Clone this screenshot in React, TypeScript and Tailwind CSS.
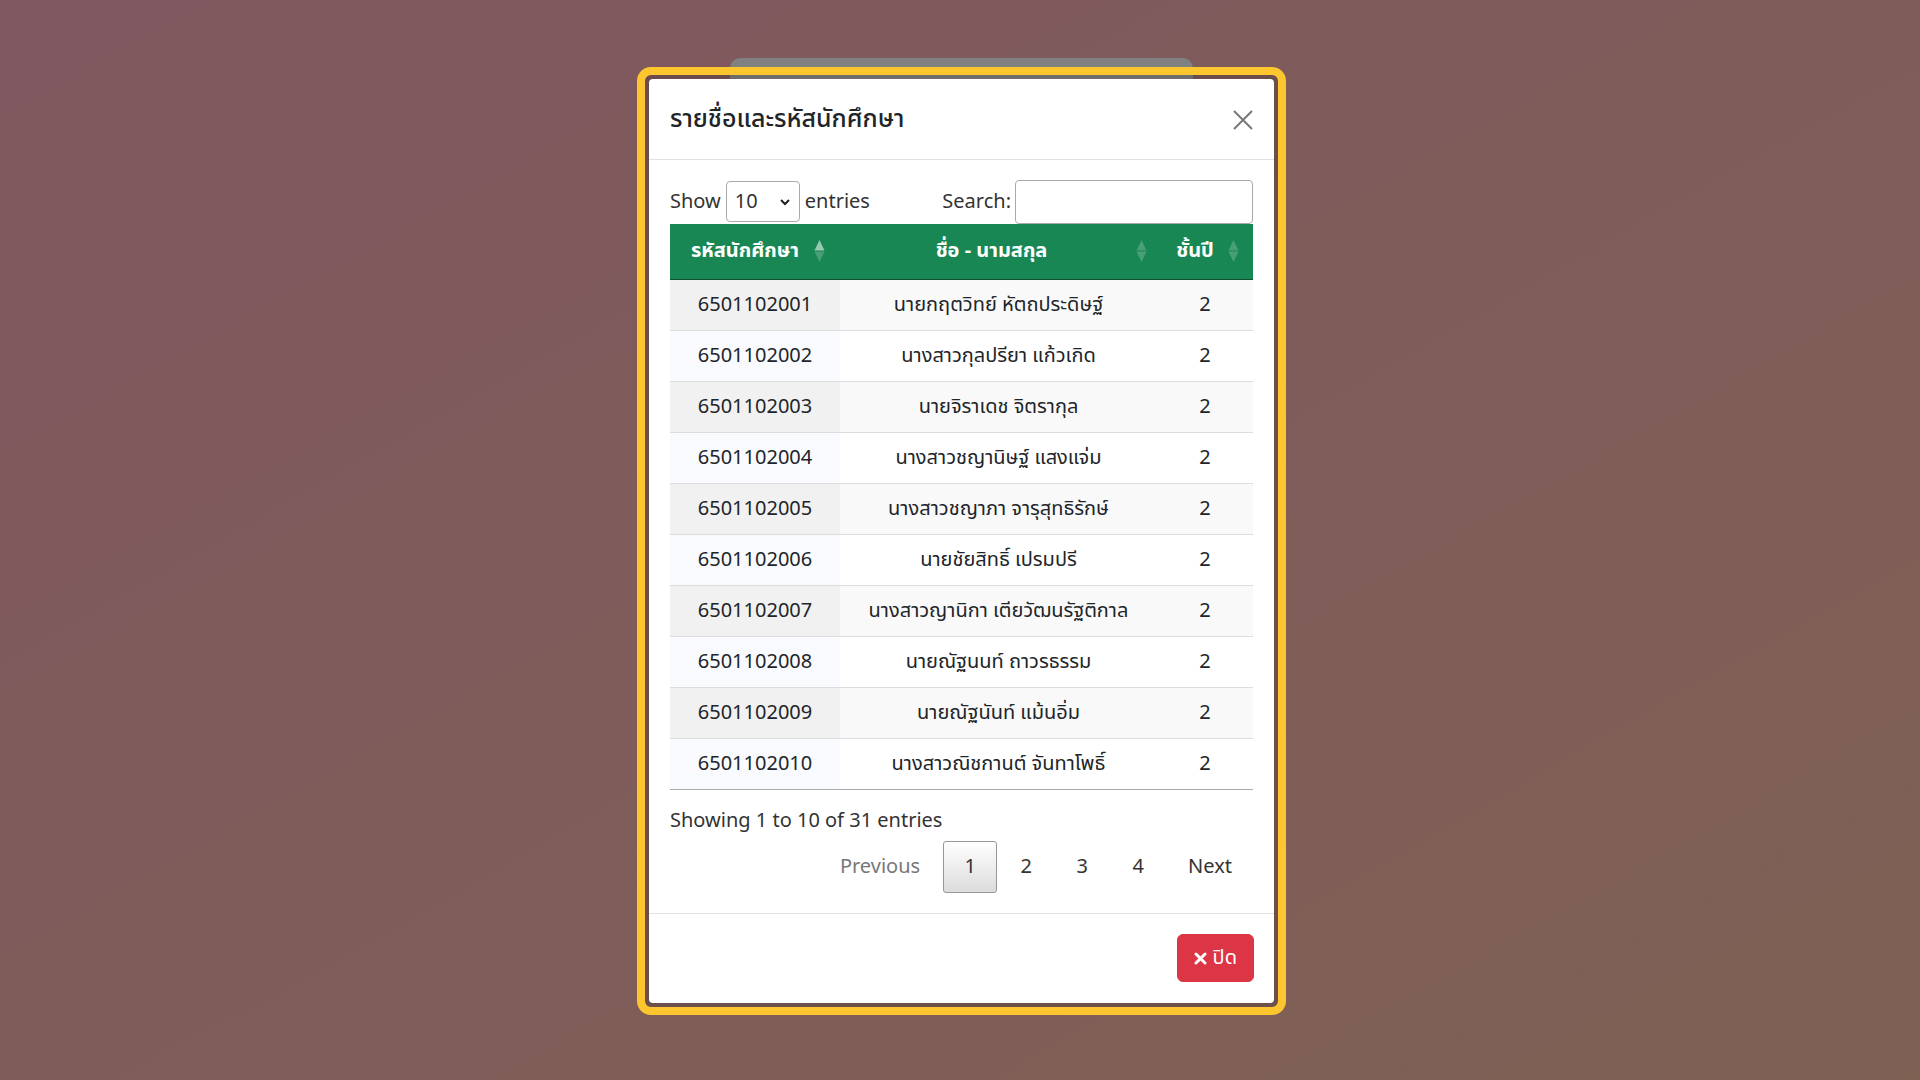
import React from "react"

const students = [
    { id: "6501102001", name: "นายกฤตวิทย์ หัตถประดิษฐ์", year: 2 },
    { id: "6501102002", name: "นางสาวกุลปรียา แก้วเกิด", year: 2 },
    { id: "6501102003", name: "นายจิราเดช จิตรากุล", year: 2 },
    { id: "6501102004", name: "นางสาวชญานิษฐ์ แสงแจ่ม", year: 2 },
    { id: "6501102005", name: "นางสาวชญาภา จารุสุทธิรักษ์", year: 2 },
    { id: "6501102006", name: "นายชัยสิทธิ์ เปรมปรี", year: 2 },
    { id: "6501102007", name: "นางสาวญานิกา เตียวัฒนรัฐติกาล", year: 2 },
    { id: "6501102008", name: "นายณัฐนนท์ ถาวรธรรม", year: 2 },
    { id: "6501102009", name: "นายณัฐนันท์ แม้นอิ่ม", year: 2 },
    { id: "6501102010", name: "นางสาวณิชกานต์ จันทาโพธิ์", year: 2 },
]

const font = { fontFamily: '"Noto Sans Thai", "Noto Sans", "Open Sans", sans-serif' }

const SortIcon = ({ active, right }: { active?: boolean, right: string }) => (
    <svg className={`absolute ${right} top-1/2 -translate-y-1/2`} width="11" height="24" viewBox="0 0 11 24">
        <path d="M5.5 1 L10.5 11.5 L0.5 11.5 Z" fill="white" fillOpacity={active ? 0.55 : 0.2} />
        <path d="M5.5 23 L10.5 12.5 L0.5 12.5 Z" fill="white" fillOpacity="0.2" />
    </svg>
)

const App = () => {
    return (
        <div className="min-h-screen w-full bg-gradient-to-br from-[#7f575f] to-[#7f6154] flex justify-center pt-[67px] pl-[3px]" style={font}>

            <div className="relative w-[649px] h-fit">
                {/* grey tab sticking out behind the modal */}
                <div className="absolute left-[93px] -top-[9px] w-[463px] h-[40px] bg-[#808080] rounded-t-[10px]"></div>

                <div className="relative border-[8px] border-[#fdc62f] rounded-[14px]">
                    <div className="bg-black/15 p-[4px] rounded-[6px]">
                        <div className="bg-white rounded-[4px] text-[20px] leading-[30px] text-[#212529]">

                            {/* header */}
                            <div className="flex items-center justify-between px-[21px] pt-[22px] pb-[20px] border-b border-[#dee2e6]">
                                <h5 className="text-[25px] leading-[37.5px] font-medium">รายชื่อและรหัสนักศึกษา</h5>
                                <button className="w-[24px] h-[24px] flex items-center justify-center mr-[-2px]">
                                    <svg width="20" height="20" viewBox="0 0 20 20" stroke="#777" strokeWidth="2">
                                        <path d="M1 1 L19 19 M19 1 L1 19" />
                                    </svg>
                                </button>
                            </div>

                            {/* body */}
                            <div className="px-[21px] pt-[20px] pb-[20px]">
                                <div className="flex items-center justify-between h-[44px] text-[#333]">
                                    <label className="flex items-center gap-[5px]">
                                        Show
                                        <div className="flex items-center justify-between w-[74px] h-[41px] border border-[#aaa] rounded-[4px] pl-[8px] pr-[8px] bg-white">
                                            <span>10</span>
                                            <svg width="12" height="12" viewBox="0 0 12 12" fill="none" stroke="#222" strokeWidth="2">
                                                <path d="M2 4 L6 8 L10 4" />
                                            </svg>
                                        </div>
                                        entries
                                    </label>
                                    <label className="flex items-center gap-[4px]">
                                        Search:
                                        <input className="w-[238px] h-[44px] border border-[#aaa] rounded-[4px] px-[6px] outline-none" />
                                    </label>
                                </div>

                                <table className="w-full border-collapse">
                                    <thead>
                                        <tr className="bg-[#198754] text-white">
                                            <th className="relative w-[170px] h-[56px] font-bold text-center pr-[20px] border-b border-[#0f5132]">
                                                รหัสนักศึกษา
                                                <SortIcon active right="right-[15px]" />
                                            </th>
                                            <th className="relative h-[56px] font-bold text-center pr-[14px] border-b border-[#0f5132]">
                                                ชื่อ - นามสกุล
                                                <SortIcon right="right-[10px]" />
                                            </th>
                                            <th className="relative w-[96px] h-[56px] font-bold text-center pr-[20px] border-b border-[#0f5132]">
                                                ชั้นปี
                                                <SortIcon right="right-[14px]" />
                                            </th>
                                        </tr>
                                    </thead>
                                    <tbody>
                                        {students.map((s, i) => (
                                            <tr key={s.id} className={i % 2 === 0 ? "bg-[#f9f9f9]" : "bg-white"}>
                                                <td className={`h-[51px] text-center border-b border-[#ddd] ${i % 2 === 0 ? "bg-[#f1f1f1]" : "bg-[#f9fafd]"}`}>{s.id}</td>
                                                <td className="h-[51px] text-center border-b border-[#ddd]">{s.name}</td>
                                                <td className="h-[51px] text-center border-b border-[#ddd]">{s.year}</td>
                                            </tr>
                                        ))}
                                    </tbody>
                                </table>
                                <div className="border-t border-[#aaa] -mt-px"></div>

                                <div className="pt-[16px] text-[#333]">Showing 1 to 10 of 31 entries</div>

                                <div className="flex justify-end gap-[2px] pt-[5px] text-[#333]">
                                    <span className="px-[20px] py-[10px] border border-transparent text-[#777]">Previous</span>
                                    <span className="w-[54px] text-center py-[10px] border border-[#979797] rounded-[3px] bg-gradient-to-b from-white to-[#dcdcdc]">1</span>
                                    <span className="w-[54px] text-center py-[10px] border border-transparent">2</span>
                                    <span className="w-[54px] text-center py-[10px] border border-transparent">3</span>
                                    <span className="w-[54px] text-center py-[10px] border border-transparent">4</span>
                                    <span className="px-[20px] py-[10px] border border-transparent">Next</span>
                                </div>
                            </div>

                            {/* footer */}
                            <div className="flex justify-end px-[15px] pt-[15px] pb-[16px] border-t border-[#dee2e6]">
                                <button className="m-[5px] flex items-center gap-[6px] bg-[#dc3545] text-white rounded-[6px] px-[16px] py-[8px] border border-[#dc3545]">
                                    <svg width="13" height="13" viewBox="0 0 13 13" stroke="white" strokeWidth="3" strokeLinecap="round">
                                        <path d="M2 2 L11 11 M11 2 L2 11" />
                                    </svg>
                                    ปิด
                                </button>
                            </div>

                        </div>
                    </div>
                </div>
            </div>

        </div>
    )
}

export default App
